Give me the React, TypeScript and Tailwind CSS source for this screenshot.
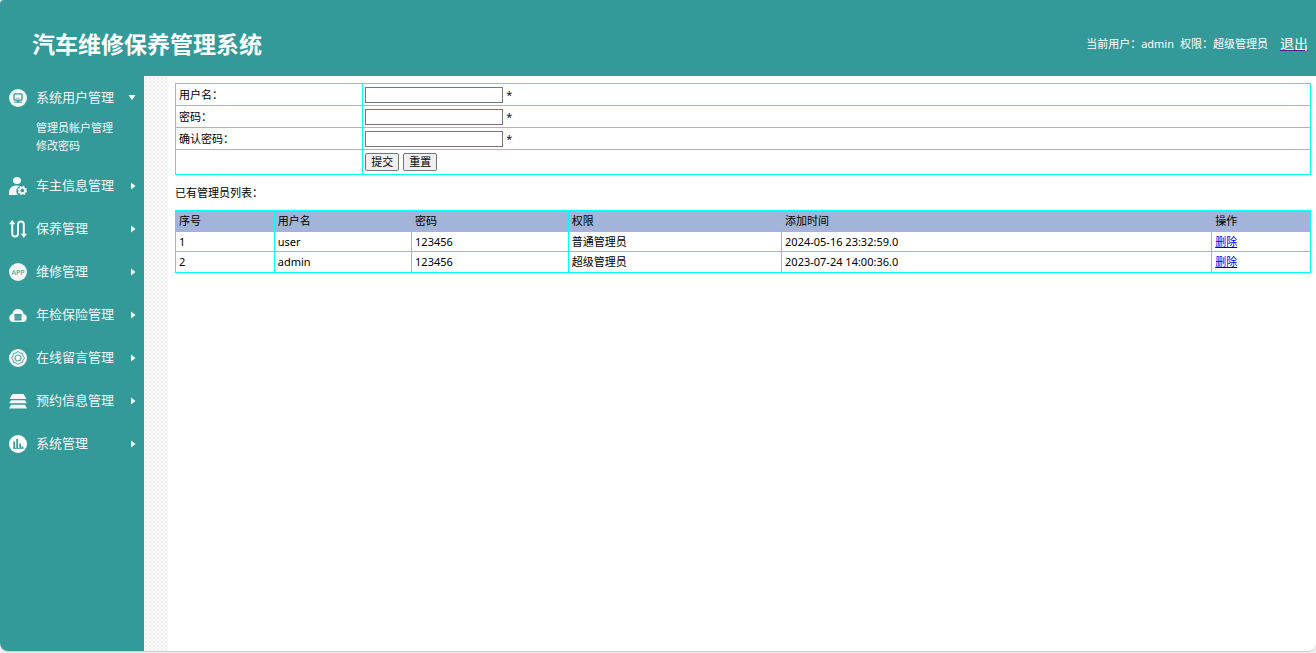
import React, { useState } from "react";

const TEAL = "#339999";

const subItems = ["管理员帐户管理", "修改密码"];

const admins = [
  { id: 1, name: "user", password: "123456", role: "普通管理员", addedAt: "2024-05-16 23:32:59.0" },
  { id: 2, name: "admin", password: "123456", role: "超级管理员", addedAt: "2023-07-24 14:00:36.0" },
];

function MonitorIcon() {
  return (
    <svg width="18" height="18" viewBox="0 0 18 18">
      <circle cx="9" cy="9" r="9" fill="#f4f6f6" />
      <rect x="5" y="4.8" width="8" height="6.4" rx="1" fill="none" stroke={TEAL} strokeWidth="1.3" />
      <path d="M7 9.2h4" stroke="#8cc4c4" strokeWidth="1" />
      <path d="M8 11.2v1.6h2v-1.6M5 13.2h8" fill="none" stroke={TEAL} strokeWidth="1" />
    </svg>
  );
}

function OwnerIcon() {
  return (
    <svg width="18" height="18" viewBox="0 0 18 18" fill="#f4f6f6">
      <ellipse cx="8" cy="3.5" rx="4" ry="3.5" />
      <path d="M0 18v-2.600C0 11 3 8.600 7 8.400c1.800 0 3 .2 3.800.8A5.300 5.300 0 0 0 9 18z" />
      <circle cx="13.300" cy="13.500" r="2.800" fill="none" stroke="#f4f6f6" strokeWidth="1.900" />
      <circle cx="13.300" cy="13.500" r="4.100" fill="none" stroke="#f4f6f6" strokeWidth="1.300" strokeDasharray="1.700 1.520" />
    </svg>
  );
}

function RouteIcon() {
  return (
    <svg width="18" height="18" viewBox="0 0 18 18" fill="none" stroke="#f4f6f6" strokeWidth="2">
      <path d="M3.200 2v11.500a2.900 2.900 0 0 0 5.800 0V4.500a2.900 2.900 0 0 1 5.800 0V16" />
      <path d="M0 4.300 3.200 0l3.200 4.300zM11.600 13.700h6.400L14.800 18z" fill="#f4f6f6" stroke="none" />
    </svg>
  );
}

function AppIcon() {
  return (
    <svg width="18" height="18" viewBox="0 0 18 18">
      <circle cx="9" cy="9" r="9" fill="#f4f6f6" />
      <text x="9" y="11.500" textAnchor="middle" fontSize="7" fontWeight="600" fill="#5aaaaa" fontFamily="Open Sans, sans-serif">
        APP
      </text>
    </svg>
  );
}

function CloudIcon() {
  return (
    <svg width="18" height="18" viewBox="0 0 18 18">
      <path
        d="M4 16a4 4 0 0 1-.6-7.900C3.700 5 6 3 9 3s5.300 2 5.600 5.100A4 4 0 0 1 14 16z"
        fill="#f4f6f6"
      />
      <rect x="5.500" y="8" width="7" height="6.500" fill={TEAL} />
      <path d="M5.500 10.200h7M5.500 12.300h7" stroke="#8cc4c4" strokeWidth=".6" />
    </svg>
  );
}

function GearIcon() {
  return (
    <svg width="18" height="18" viewBox="0 0 18 18">
      <circle cx="9" cy="9" r="9" fill="#f4f6f6" />
      <g fill="none" stroke="#5aaaaa">
        <path
          d="M9 2.400 11 4l2.600.4.4 2.600L15.600 9 14 11l-.4 2.600-2.600.4L9 15.600 7 14l-2.600-.4L4 11 2.400 9 4 7l.4-2.600L7 4z"
          strokeLinejoin="round"
        />
        <circle cx="9" cy="9" r="3" strokeWidth="1.200" />
      </g>
    </svg>
  );
}

function StackIcon() {
  return (
    <svg width="18" height="18" viewBox="0 0 18 18" fill="#f4f6f6">
      <path d="M3.500 2h11L17.500 7H.5zM2 8.200h14l2 3H0zM2 12.800h14l2 3.700H0z" />
    </svg>
  );
}

function ChartIcon() {
  return (
    <svg width="18" height="18" viewBox="0 0 18 18">
      <circle cx="9" cy="9" r="9" fill="#fff" />
      <path d="M5.200 13V6.500M8.200 13V4M11.200 13V8.500M13.500 13v-1.500" stroke={TEAL} strokeWidth="1.800" />
      <path d="M3.800 13.500h10.700" stroke={TEAL} strokeWidth=".8" />
    </svg>
  );
}

const menu = [
  { label: "系统用户管理", Icon: MonitorIcon, children: subItems },
  { label: "车主信息管理", Icon: OwnerIcon },
  { label: "保养管理", Icon: RouteIcon },
  { label: "维修管理", Icon: AppIcon },
  { label: "年检保险管理", Icon: CloudIcon },
  { label: "在线留言管理", Icon: GearIcon },
  { label: "预约信息管理", Icon: StackIcon },
  { label: "系统管理", Icon: ChartIcon },
];

function Sidebar() {
  const [open, setOpen] = useState(0);

  return (
    <nav className="w-36 shrink-0 bg-[#339999] text-[#f4f6f6]">
      {menu.map(({ label, Icon, children }, i) => (
        <div key={label}>
          <button
            type="button"
            onClick={() => setOpen(open === i ? -1 : i)}
            className="flex h-[43px] w-full items-center pl-[9px] pr-2 text-left text-[13px] cursor-pointer"
          >
            <Icon />
            <span className="ml-[9px] flex-1 whitespace-nowrap pb-px">{label}</span>
            {open === i ? (
              <svg width="8" height="8" viewBox="0 0 8 8" fill="#fff">
                <path d="M.5 1h7L4 6z" />
              </svg>
            ) : (
              <svg width="5" height="8" viewBox="0 0 5 8" fill="#fff">
                <path d="M0 .5v7L4.500 4z" />
              </svg>
            )}
          </button>
          {open === i && children && (
            <ul className="pb-[9px] pl-9 text-[11px] leading-[18px]">
              {children.map((item) => (
                <li key={item}>
                  <a href="#">{item}</a>
                </li>
              ))}
            </ul>
          )}
        </div>
      ))}
    </nav>
  );
}

const cell = "border border-[#00ffff] px-[3px] py-0 text-left font-normal";
const field = "border border-[#00ffff] px-0.5 py-0";
const button = "h-[18px] rounded-[2px] border border-[#767676] bg-[#efefef] px-[5px] leading-4";

const formRows = [
  { id: "username", label: "用户名：", type: "text" },
  { id: "password", label: "密码：", type: "password" },
  { id: "confirm", label: "确认密码：", type: "password" },
];

function AdminForm() {
  return (
    <form onSubmit={(e) => e.preventDefault()}>
      <table className="w-full table-fixed border-collapse">
        <tbody>
          {formRows.map((row) => (
            <tr key={row.id} className="h-[22px]">
              <td className={`${cell} w-[16.5%]`}>
                <label htmlFor={row.id}>{row.label}</label>
              </td>
              <td className={field}>
                <div className="flex items-center gap-[3px]">
                  <input
                    id={row.id}
                    type={row.type}
                    className="h-4 w-[138px] border border-[#767676] bg-white px-px"
                  />
                  <span className="font-['Open_Sans',sans-serif]">*</span>
                </div>
              </td>
            </tr>
          ))}
          <tr className="h-[25px]">
            <td className={cell}></td>
            <td className={field}>
              <div className="flex items-center gap-1">
                <button type="submit" className={button}>提交</button>
                <button type="reset" className={button}>重置</button>
              </div>
            </td>
          </tr>
        </tbody>
      </table>
    </form>
  );
}

function AdminTable() {
  return (
    <table className="w-full table-fixed border-collapse">
      <thead>
        <tr className="h-[21px] bg-[#a2b5d8]">
          <th className={`${cell} w-[8.7%]`}>序号</th>
          <th className={`${cell} w-[12.1%]`}>用户名</th>
          <th className={`${cell} w-[13.8%]`}>密码</th>
          <th className={`${cell} w-[18.8%]`}>权限</th>
          <th className={`${cell} w-[37.9%]`}>添加时间</th>
          <th className={cell}>操作</th>
        </tr>
      </thead>
      <tbody>
        {admins.map((a) => (
          <tr key={a.id} className="h-5 last:h-[21px]">
            <td className={cell}>{a.id}</td>
            <td className={cell}>{a.name}</td>
            <td className={cell}>{a.password}</td>
            <td className={cell}>{a.role}</td>
            <td className={cell}>{a.addedAt}</td>
            <td className={cell}>
              <a href="#" className="text-[#0000ee] underline">删除</a>
            </td>
          </tr>
        ))}
      </tbody>
    </table>
  );
}

export default function App() {
  return (
    <div className="min-h-screen flex flex-col bg-[#f0f0f0] pb-0.5 font-['Noto_Sans','Noto_Sans_CJK_SC',sans-serif] text-[11px] leading-4 text-black">
      <div className="flex flex-1 flex-col overflow-hidden rounded-tl-[4px] rounded-b-lg bg-white shadow-[0_1px_1px_#cccccc]">
        {/* Header */}
        <header className="flex h-[76px] items-center justify-between bg-[#339999] pl-8 pr-2 pt-3 text-white">
          <h1 className="pt-1 text-[23px] font-bold leading-8 font-['Liberation_Serif','Noto_Sans_CJK_SC',serif]">
            汽车维修保养管理系统
          </h1>
          <div className="flex items-center">
            <span>当前用户：admin</span>
            <span className="ml-1.5">权限：超级管理员</span>
            <a href="#" className="ml-3 text-sm underline decoration-[#551a8b]">退出</a>
          </div>
        </header>

        <div className="flex flex-1">
          <Sidebar />
          <div className="w-6 shrink-0 bg-[#f7f7f7] bg-[radial-gradient(#f0f0f0_1px,transparent_1px)] bg-[size:4px_4px]"></div>
          <main className="min-w-0 flex-1 pl-[7px] pr-[5px] pt-[7px]">
            <AdminForm />
            <p className="pt-2.5 pb-[9px]">已有管理员列表：</p>
            <AdminTable />
          </main>
        </div>
      </div>
    </div>
  );
}
